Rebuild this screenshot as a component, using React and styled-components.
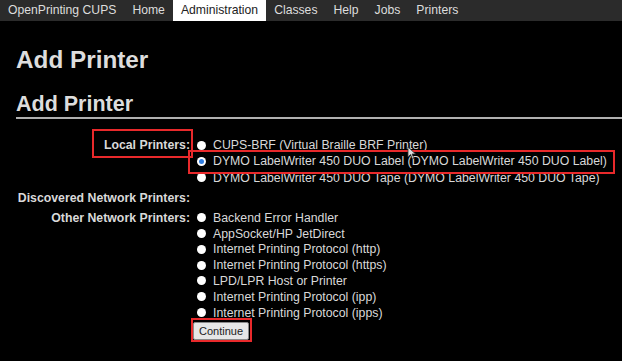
import React from "react";
import styled, { createGlobalStyle } from "styled-components";

const GlobalStyle = createGlobalStyle`
body {
  margin: 0;
  background: #000;
  font-family: "Liberation Sans", Arial, sans-serif;
}
`;

const Page = styled.div`
position: relative;
width: 622px;
height: 361px;
overflow: hidden;
background: #000;
color: #d9d9d9;
font-size: 12.3px;
`;

const NavBar = styled.nav`
display: flex;
height: 21px;
background: #2b2b2b;
`;

const NavItem = styled.a`
padding: 0 8px;
line-height: 21px;
font-size: 12.2px;
color: ${(p) => (p.$active ? "#222" : "#ddd")};
background: ${(p) => (p.$active ? "#fff" : "transparent")};
text-decoration: none;
white-space: nowrap;
`;

const Main = styled.div`
padding-left: 16px;
`;

const Title = styled.h1`
margin: 25px 0 0;
font-size: 24.3px;
line-height: 28px;
font-weight: 700;
color: #ddd;
`;

const SubTitle = styled.h2`
margin: 17px 0 0;
font-size: 21.5px;
line-height: 26px;
font-weight: 700;
color: #ddd;
border-bottom: 2px solid #b0b0b0;
`;

const Form = styled.div`
display: grid;
grid-template-columns: 174px 1fr;
margin-top: 16px;
`;

const Label = styled.div`
padding: 2px 0;
text-align: right;
font-weight: 700;
line-height: 16px;
white-space: nowrap;
`;

const Options = styled.div`
display: flex;
flex-direction: column;
padding: 2px 0 2px 7px;
`;

const Option = styled.label`
display: flex;
align-items: center;
gap: 7px;
height: ${(p) => (p.$tight ? "15.8px" : "16.3px")};
white-space: nowrap;
`;

const Radio = styled.span`
width: 9px;
height: 9px;
border-radius: 50%;
background: #fff;
box-sizing: border-box;
flex: none;
display: flex;
align-items: center;
justify-content: center;
&::after {
  content: "";
  display: ${(p) => (p.$checked ? "block" : "none")};
  width: 5px;
  height: 5px;
  border-radius: 50%;
  background: #2f7de1;
}
`;

const Button = styled.button`
align-self: flex-start;
margin: 2px 0 0 -4px;
height: 18px;
padding: 0 5px;
font-family: "Liberation Sans", Arial, sans-serif;
font-size: 11px;
color: #222;
background: #e6e6e6;
border: 1px solid #8a8a8a;
border-radius: 2px;
`;

const Mark = styled.div`
position: absolute;
left: ${(p) => p.$x}px;
top: ${(p) => p.$y}px;
width: ${(p) => p.$w}px;
height: ${(p) => p.$h}px;
border: 2px solid #e8292b;
box-sizing: border-box;
pointer-events: none;
`;

const Cursor = styled.svg`
position: absolute;
left: 407px;
top: 146px;
`;

const navItems = ["OpenPrinting CUPS", "Home", "Administration", "Classes", "Help", "Jobs", "Printers"];

const localPrinters = [
  "CUPS-BRF (Virtual Braille BRF Printer)",
  "DYMO LabelWriter 450 DUO Label (DYMO LabelWriter 450 DUO Label)",
  "DYMO LabelWriter 450 DUO Tape (DYMO LabelWriter 450 DUO Tape)",
];

const otherPrinters = [
  "Backend Error Handler",
  "AppSocket/HP JetDirect",
  "Internet Printing Protocol (http)",
  "Internet Printing Protocol (https)",
  "LPD/LPR Host or Printer",
  "Internet Printing Protocol (ipp)",
  "Internet Printing Protocol (ipps)",
];

function App() {
  return (
    <Page>
      <GlobalStyle />
      <NavBar>
        {navItems.map((n) => (
          <NavItem key={n} $active={n === "Administration"}>{n}</NavItem>
        ))}
      </NavBar>
      <Main>
        <Title>Add Printer</Title>
        <SubTitle>Add Printer</SubTitle>
        <Form>
          <Label>Local Printers:</Label>
          <Options>
            {localPrinters.map((p, i) => (
              <Option key={p}>
                <Radio $checked={i === 1} />
                {p}
              </Option>
            ))}
          </Options>
          <Label>Discovered Network Printers:</Label>
          <Options />
          <Label>Other Network Printers:</Label>
          <Options>
            {otherPrinters.map((p) => (
              <Option key={p} $tight>
                <Radio />
                {p}
              </Option>
            ))}
            <Button>Continue</Button>
          </Options>
        </Form>
      </Main>
      <Mark $x={92} $y={129} $w={101} $h={29} />
      <Mark $x={188} $y={150} $w={427} $h={24} />
      <Mark $x={191} $y={318} $w={61} $h={24} />
      <Cursor width="10" height="14" viewBox="0 0 10 14">
        <path d="M1 1 L1 11 L3.5 8.5 L5.5 13 L7 12.3 L5 8 L8.5 8 Z" fill="#ddd" stroke="#333" strokeWidth="0.8" />
      </Cursor>
    </Page>
  );
}

export default App;
